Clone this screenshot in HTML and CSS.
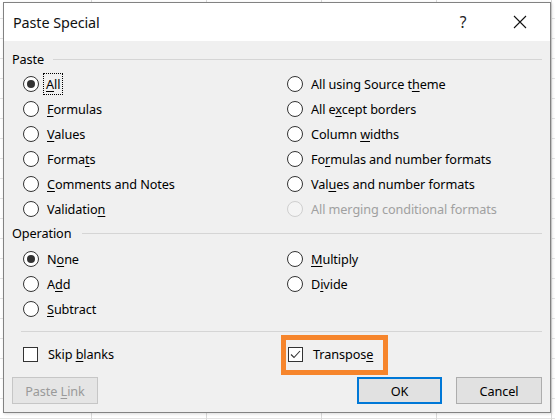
FILE: index.html
```html
<!DOCTYPE html>
<html>
<head>
<meta charset="utf-8">
<title>Paste Special</title>
<link rel="stylesheet" href="styles.css">
</head>
<body>
<div class="dialog">
  <div class="titlebar">
    <span class="title">Paste Special</span>
    <span class="help">?</span>
    <span class="close"><svg width="14" height="14" viewBox="0 0 14 14"><path d="M1 1L13 13M13 1L1 13" stroke="#111" stroke-width="1.1" fill="none"/></svg></span>
  </div>
  <div class="body">
    <div class="group-head"><span>Paste</span><i class="rule"></i></div>
    <div class="grid">
      <div class="opt"><span class="radio on"></span><span class="focus"><u>A</u>ll</span></div>
      <div class="opt"><span class="radio"></span><span>All using Source t<u>h</u>eme</span></div>
      <div class="opt"><span class="radio"></span><span><u>F</u>ormulas</span></div>
      <div class="opt"><span class="radio"></span><span>All e<u>x</u>cept borders</span></div>
      <div class="opt"><span class="radio"></span><span><u>V</u>alues</span></div>
      <div class="opt"><span class="radio"></span><span>Column <u>w</u>idths</span></div>
      <div class="opt"><span class="radio"></span><span>Forma<u>t</u>s</span></div>
      <div class="opt"><span class="radio"></span><span>Fo<u>r</u>mulas and number formats</span></div>
      <div class="opt"><span class="radio"></span><span><u>C</u>omments and Notes</span></div>
      <div class="opt"><span class="radio"></span><span>Val<u>u</u>es and number formats</span></div>
      <div class="opt"><span class="radio"></span><span>Validatio<u>n</u></span></div>
      <div class="opt disabled"><span class="radio"></span><span>All merging conditional formats</span></div>
    </div>
    <div class="group-head"><span>Operation</span><i class="rule op"></i></div>
    <div class="grid ops">
      <div class="opt"><span class="radio on"></span><span>N<u>o</u>ne</span></div>
      <div class="opt"><span class="radio"></span><span><u>M</u>ultiply</span></div>
      <div class="opt"><span class="radio"></span><span>A<u>d</u>d</span></div>
      <div class="opt"><span class="radio"></span><span>D<u>i</u>vide</span></div>
      <div class="opt"><span class="radio"></span><span><u>S</u>ubtract</span></div>
    </div>
    <div class="separator"></div>
    <div class="grid checks">
      <div class="opt"><span class="check"></span><span>Skip <u>b</u>lanks</span></div>
      <div class="opt transpose"><span class="check"><svg width="13" height="13" viewBox="0 0 13 13"><path d="M2 6.5L5 9.5L11 3" stroke="#333" stroke-width="1.1" fill="none"/></svg></span><span>Transpos<u>e</u></span></div>
    </div>
    <div class="buttons">
      <span class="btn disabled"><span>Paste <u>L</u>ink</span></span>
      <span class="btn primary"><span>OK</span></span>
      <span class="btn"><span>Cancel</span></span>
    </div>
  </div>
</div>
</body>
</html>
```

FILE: styles.css
```css
html, body {
  margin: 0;
  padding: 0;
}
body {
  width: 555px;
  height: 420px;
  overflow: hidden;
  font-family: "Noto Sans", "Open Sans", sans-serif;
  font-size: 12.7px;
  letter-spacing: -0.1px;
  color: #000;
  background-color: #fff;
  background-image:
    linear-gradient(to right, #dadada 1px, transparent 1px),
    linear-gradient(to bottom, #e3e3e3 1px, transparent 1px);
  background-size: 115px 100%, 100% 20px;
  background-position: 91px 0, 0 18px;
}
.dialog {
  box-sizing: border-box;
  margin: 2px 0 0 3px;
  width: 548px;
  height: 411px;
  border: 1px solid #828282;
  background: #f0f0f0;
  box-shadow: 1px 1px 3px rgba(0,0,0,0.15);
  display: flex;
  flex-direction: column;
}
.titlebar {
  height: 38px;
  background: #fff;
  display: flex;
  align-items: center;
  padding-left: 9px;
}
.title {
  font-size: 14.4px;
  color: #111;
  letter-spacing: -0.1px;
}
.help {
  margin-left: auto;
  font-size: 15.5px;
  color: #222;
  width: 20px;
  text-align: center;
}
.close {
  display: flex;
  margin-left: 40px;
  margin-right: 23px;
}
.body {
  padding: 7px 8px 8px 8px;
  display: flex;
  flex-direction: column;
}
.group-head {
  height: 22px;
  display: flex;
  align-items: center;
  color: #000;
}
.group-head + .grid {
  margin-top: 1px;
}
.grid + .group-head {
  margin-top: 1px;
}
.grid.ops {
  margin-top: 2px;
}
.rule {
  flex: 1;
  height: 1px;
  background: #d5d5d5;
  margin-left: 9px;
}
.rule.op {
  margin-left: 11px;
}
.grid {
  display: grid;
  grid-template-columns: 264px auto;
  grid-auto-rows: 25px;
  margin-left: 11px;
}
.opt {
  display: flex;
  align-items: center;
  gap: 8px;
  white-space: nowrap;
}
u {
  text-decoration-thickness: 1px;
  text-underline-offset: 2px;
}
.radio {
  box-sizing: border-box;
  width: 16px;
  height: 16px;
  border-radius: 50%;
  border: 1px solid #333;
  background: #fff;
  display: flex;
  align-items: center;
  justify-content: center;
  flex: none;
}
.radio.on::after {
  content: "";
  width: 8px;
  height: 8px;
  border-radius: 50%;
  background: #333;
}
.disabled {
  color: #a0a0a0;
}
.opt.disabled .radio {
  border-color: #cfcfcf;
  background: #f4f4f4;
}
.focus {
  outline: 1px dotted #000;
  outline-offset: 0;
  padding: 1px 2px;
  margin: 0 -3px 0 -3px;
}
.separator {
  margin: 10px 0 0 9px;
  height: 1px;
  background: #d5d5d5;
}
.grid.checks {
  margin-top: 10px;
  grid-auto-rows: 24px;
}
.check {
  box-sizing: border-box;
  width: 15px;
  height: 15px;
  border: 1px solid #333;
  background: #fff;
  display: flex;
  align-items: center;
  justify-content: center;
  flex: none;
  margin-right: 2px;
}
.transpose {
  position: relative;
  margin-left: 1px;
}
.transpose::after {
  content: "";
  position: absolute;
  left: -7px;
  top: -7px;
  width: 107px;
  height: 40px;
  box-sizing: border-box;
  border: 5px solid #f6852c;
}
.buttons {
  margin-top: 11px;
  display: flex;
  align-items: center;
}
.btn {
  box-sizing: border-box;
  height: 27px;
  width: 85px;
  display: flex;
  align-items: center;
  justify-content: center;
  background: #e1e1e1;
  border: 1px solid #adadad;
  color: #000;
}
.btn.disabled {
  width: 86px;
  background: #e5e5e5;
  border-color: #c6c6c6;
  color: #9a9a9a;
}
.btn.primary {
  margin-left: auto;
  border: 2px solid #0078d7;
  margin-right: 14px;
}
.btn.primary + .btn {
  width: 86px;
}
```
